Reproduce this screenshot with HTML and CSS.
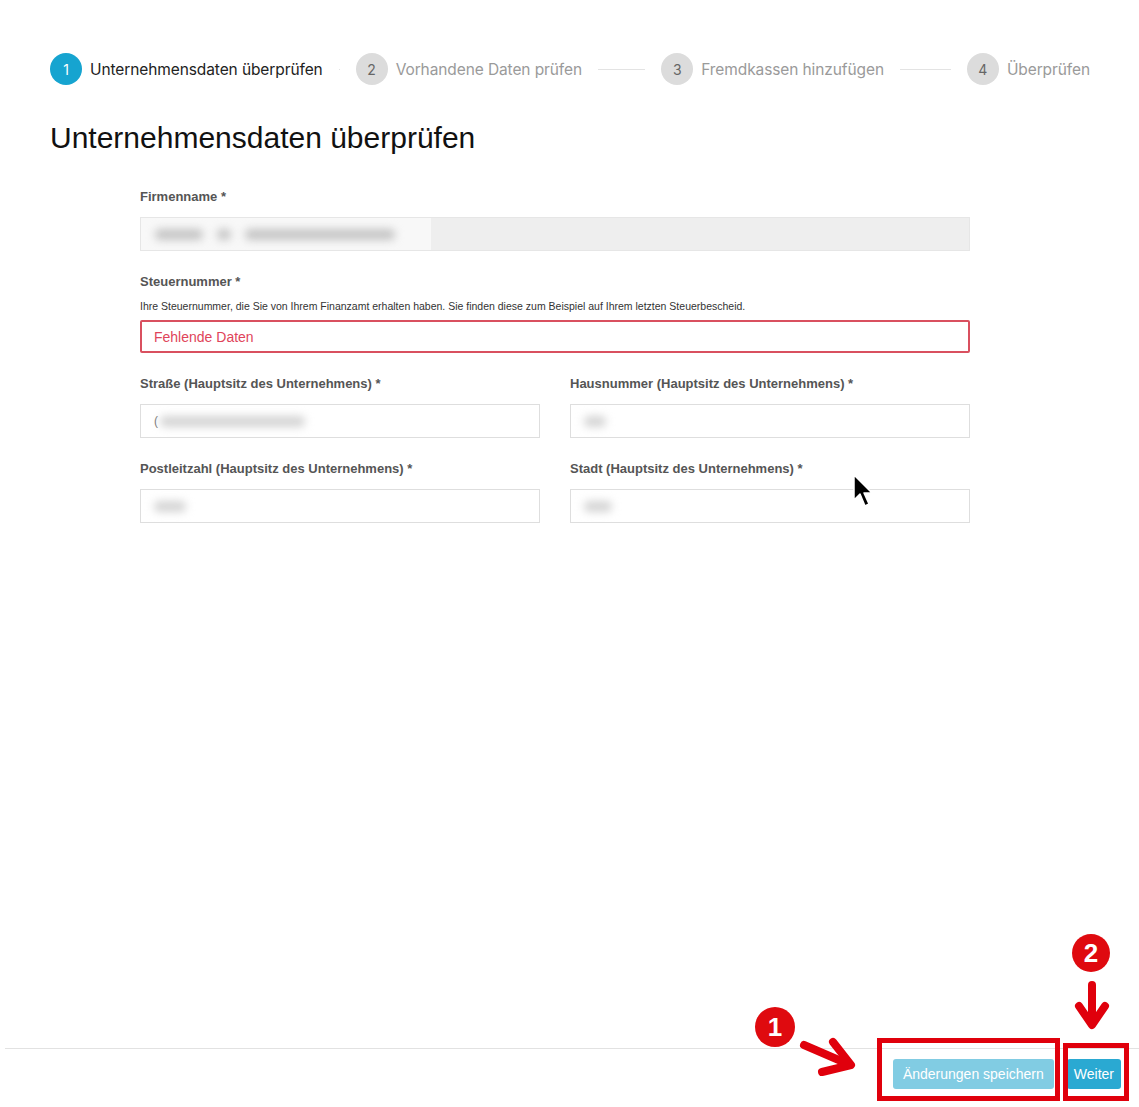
FILE: index.html
```html
<!DOCTYPE html>
<html lang="de">
<head>
<meta charset="UTF-8">
<meta name="viewport" content="width=device-width, initial-scale=1.0">
<link rel="stylesheet" href="styles.css">
</head>
<body>
<div class="page">
	<div class="stepper">
		<div class="step active">
			<span class="step-num">1</span>
			<span class="step-label">Unternehmensdaten überprüfen</span>
			<span class="step-line"></span>
		</div>
		<div class="step">
			<span class="step-num">2</span>
			<span class="step-label">Vorhandene Daten prüfen</span>
			<span class="step-line"></span>
		</div>
		<div class="step">
			<span class="step-num">3</span>
			<span class="step-label">Fremdkassen hinzufügen</span>
			<span class="step-line"></span>
		</div>
		<div class="step last">
			<span class="step-num">4</span>
			<span class="step-label">Überprüfen</span>
		</div>
	</div>

	<h1 class="title">Unternehmensdaten überprüfen</h1>

	<form class="form">
		<div class="field">
			<label class="label">Firmenname *</label>
			<div class="input disabled">
				<span class="blur-wrap">
					<span class="blur" style="width:48px"></span>
					<span class="blur" style="width:14px"></span>
					<span class="blur" style="width:150px"></span>
				</span>
			</div>
		</div>

		<div class="field">
			<label class="label">Steuernummer *</label>
			<p class="help">Ihre Steuernummer, die Sie von Ihrem Finanzamt erhalten haben. Sie finden diese zum Beispiel auf Ihrem letzten Steuerbescheid.</p>
			<div class="input error">Fehlende Daten</div>
		</div>

		<div class="row">
			<div class="field">
				<label class="label">Straße (Hauptsitz des Unternehmens) *</label>
				<div class="input">
					<span class="mark">(</span>
					<span class="blur light" style="width:145px"></span>
				</div>
			</div>
			<div class="field">
				<label class="label">Hausnummer (Hauptsitz des Unternehmens) *</label>
				<div class="input"><span class="blur light" style="width:22px"></span></div>
			</div>
		</div>

		<div class="row">
			<div class="field">
				<label class="label">Postleitzahl (Hauptsitz des Unternehmens) *</label>
				<div class="input"><span class="blur light" style="width:32px"></span></div>
			</div>
			<div class="field">
				<label class="label">Stadt (Hauptsitz des Unternehmens) *</label>
				<div class="input"><span class="blur light" style="width:28px"></span></div>
			</div>
		</div>
	</form>

	<footer class="footer">
		<button class="btn btn-light" type="button">Änderungen speichern</button>
		<button class="btn btn-primary" type="button">Weiter</button>
	</footer>
</div>

<svg class="overlay" width="1139" height="1107" viewBox="0 0 1139 1107">
	<!-- mouse cursor -->
	<path d="M854 475 L854 500 L860 494 L865 506 L869 504 L864 493 L872 493 Z" fill="#000" stroke="#fff" stroke-width="1.5" stroke-linejoin="round"/>

	<!-- annotation boxes -->
	<rect x="879.5" y="1040.5" width="178" height="58" fill="none" stroke="#e0000c" stroke-width="5"/>
	<rect x="1065.5" y="1045.5" width="61" height="53" fill="none" stroke="#e0000c" stroke-width="5"/>

	<!-- marker 1 -->
	<circle cx="775" cy="1027" r="20" fill="#df0a0f"/>
	<text x="775" y="1036" class="marker-text" text-anchor="middle">1</text>
	<path d="M804 1045 L848 1064" stroke="#e0000c" stroke-width="8" stroke-linecap="round"/>
	<path d="M833 1042 L851 1065 L822 1072" fill="none" stroke="#e0000c" stroke-width="8" stroke-linecap="round" stroke-linejoin="round"/>

	<!-- marker 2 -->
	<circle cx="1091" cy="953" r="19" fill="#df0a0f"/>
	<text x="1091" y="962" class="marker-text" text-anchor="middle">2</text>
	<path d="M1092 985 L1092 1022" stroke="#e0000c" stroke-width="8" stroke-linecap="round"/>
	<path d="M1079 1006 L1092 1025 L1105 1006" fill="none" stroke="#e0000c" stroke-width="8" stroke-linecap="round" stroke-linejoin="round"/>
</svg>
</body>
</html>
```

FILE: styles.css
```css
* {
	box-sizing: border-box;
}

body {
	margin: 0;
	background-color: #fff;
	font-family: "Liberation Sans", Arial, sans-serif;
	color: #222;
}

.page {
	display: flex;
	flex-direction: column;
	min-height: 100vh;
}

/* stepper */
.stepper {
	display: flex;
	align-items: center;
	padding: 53px 49px 0 50px;
	font-family: Inter, "Noto Sans", sans-serif;
}

.step {
	display: flex;
	align-items: center;
	flex: 1;
	min-width: 0;
}

.step.last {
	flex: none;
}

.step-num {
	display: flex;
	align-items: center;
	justify-content: center;
	flex: none;
	width: 32px;
	height: 32px;
	border-radius: 50%;
	background-color: #dcdcdc;
	color: #666;
	font-size: 14px;
}

.step-label {
	margin-left: 8px;
	font-size: 15.5px;
	color: #9a9a9a;
	white-space: nowrap;
	letter-spacing: -0.1px;
}

.step.active .step-num {
	background-color: #16a4d0;
	color: #fff;
}

.step.active .step-label {
	color: #222;
}

.step-line {
	flex: 1;
	height: 1px;
	margin: 0 16px;
	background-color: #e3e3e3;
}

.title {
	margin: 35px 0 0 50px;
	font-size: 30px;
	font-weight: normal;
	line-height: 35px;
	color: #111;
}

/* form */
.form {
	width: 830px;
	margin: 34px 0 0 140px;
}

.field {
	display: flex;
	flex-direction: column;
	margin-bottom: 23px;
}

.row {
	display: grid;
	grid-template-columns: 1fr 1fr;
	column-gap: 30px;
}

.label {
	font-size: 13px;
	font-weight: bold;
	line-height: 16px;
	color: #555;
	margin-bottom: 12px;
}

.help {
	margin: -3px 0 7px;
	font-size: 10.5px;
	line-height: 14px;
	color: #333;
}

.input {
	display: flex;
	align-items: center;
	height: 34px;
	padding: 0 13px;
	border: 1px solid #dedede;
	background-color: #fff;
	font-size: 14px;
	color: #555;
}

.input.disabled {
	padding-left: 0;
	background-color: #eeeeee;
	border-color: #e6e6e6;
}

.input.error {
	height: 33px;
	border: 2px solid #d9505f;
	border-radius: 2px;
	padding-left: 12px;
	color: #e0445a;
}

.blur-wrap {
	display: flex;
	align-items: center;
	gap: 14px;
	height: 100%;
	padding: 0 36px 0 14px;
	background-color: #f8f8f8;
}

.blur {
	display: inline-block;
	height: 11px;
	border-radius: 5px;
	background-color: #c4c4c4;
	filter: blur(4px);
}

.blur.light {
	background-color: #d4d4d4;
}

.mark {
	font-size: 12px;
	color: #777;
	margin-right: 2px;
}

/* footer */
.footer {
	display: flex;
	justify-content: flex-end;
	gap: 13px;
	margin: auto 0 0 5px;
	padding: 10px 18px 18px;
	border-top: 1px solid #e2e2e2;
}

.btn {
	height: 30px;
	border: none;
	border-radius: 3px;
	color: #fff;
	font-family: "Liberation Sans", Arial, sans-serif;
	font-size: 14px;
	cursor: pointer;
}

.btn-light {
	padding: 0 10px;
	background-color: #81cce3;
}

.btn-primary {
	padding: 0 7px;
	background-color: #2aa9d2;
}

/* annotations drawn over the screenshot */
.overlay {
	position: absolute;
	top: 0;
	left: 0;
	pointer-events: none;
}

.marker-text {
	font-family: "Liberation Sans", Arial, sans-serif;
	font-size: 26px;
	font-weight: bold;
	fill: #fff;
}
```
